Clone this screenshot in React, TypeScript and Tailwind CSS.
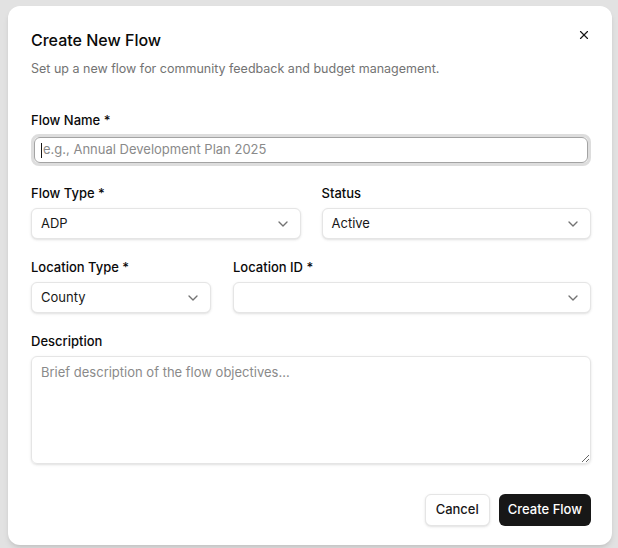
import { ChevronDown, X } from "lucide-react"

function Select({ value, className = "" }: { value: string; className?: string }) {
  return (
    <div className={`flex h-[31px] items-center justify-between rounded-md border border-[#e5e5e5] bg-white px-[9px] text-[13px] text-[#171717] shadow-sm ${className}`}>
      <span>{value}</span>
      <ChevronDown className="h-4 w-4 text-[#737373]" />
    </div>
  )
}

export default function App() {
  return (
    <div className="min-h-[548px] bg-[#e2e2e2] px-[8px] pt-[6px]" style={{ fontFamily: "Inter, sans-serif" }}>
      <div className="relative h-[539px] w-[604px] rounded-[12px] bg-white pl-[23px] pr-[21px] pt-[24px] shadow-md">
        <X className="absolute right-[21px] top-[22px] h-[14px] w-[14px] text-[#171717]" strokeWidth={2} />
        <h2 className="text-[16px] font-medium leading-[20px] text-[#0a0a0a]">Create New Flow</h2>
        <p className="mt-[11px] text-[12.5px] leading-[16px] text-[#737373]">Set up a new flow for community feedback and budget management.</p>

        <div className="mt-[35px]">
          <label className="block text-[13px] font-medium leading-[16px] text-[#0a0a0a]">Flow Name *</label>
          <div className="mt-[6px] rounded-[8px] border-[3px] border-[#d4d4d4]/80">
            <div className="flex h-[26px] items-center rounded-md border border-[#a3a3a3] bg-white px-[6px] text-[13px] text-[#8a8a8a]">
              <span className="mr-[1px] h-[15px] w-[1px] bg-[#171717]" />e.g., Annual Development Plan 2025
            </div>
          </div>
        </div>

        <div className="mt-[19px] grid grid-cols-2 gap-[21px]">
          <div>
            <label className="block text-[13px] font-medium leading-[16px] text-[#0a0a0a]">Flow Type *</label>
            <Select value="ADP" className="mt-[7px]" />
          </div>
          <div>
            <label className="block text-[13px] font-medium leading-[16px] text-[#0a0a0a]">Status</label>
            <Select value="Active" className="mt-[7px]" />
          </div>
        </div>

        <div className="mt-[20px] flex gap-[22px]">
          <div className="w-[180px]">
            <label className="block text-[13px] font-medium leading-[16px] text-[#0a0a0a]">Location Type *</label>
            <Select value="County" className="mt-[7px]" />
          </div>
          <div className="flex-1">
            <label className="block text-[13px] font-medium leading-[16px] text-[#0a0a0a]">Location ID *</label>
            <Select value="" className="mt-[7px]" />
          </div>
        </div>

        <div className="mt-[20px]">
          <label className="block text-[13px] font-medium leading-[16px] text-[#0a0a0a]">Description</label>
          <textarea
            placeholder="Brief description of the flow objectives..."
            className="mt-[7px] block h-[108px] w-full rounded-md border border-[#e5e5e5] px-[9px] py-[6px] text-[13px] placeholder:text-[#8a8a8a] shadow-sm"
          />
        </div>

        <div className="mt-[30px] flex justify-end gap-[9px]">
          <button className="h-[32px] rounded-md border border-[#e5e5e5] bg-white px-[10px] text-[13px] font-medium text-[#171717] shadow-sm">Cancel</button>
          <button className="h-[32px] rounded-md bg-[#171717] px-[9px] text-[13px] font-medium text-white">Create Flow</button>
        </div>
      </div>
    </div>
  )
}
